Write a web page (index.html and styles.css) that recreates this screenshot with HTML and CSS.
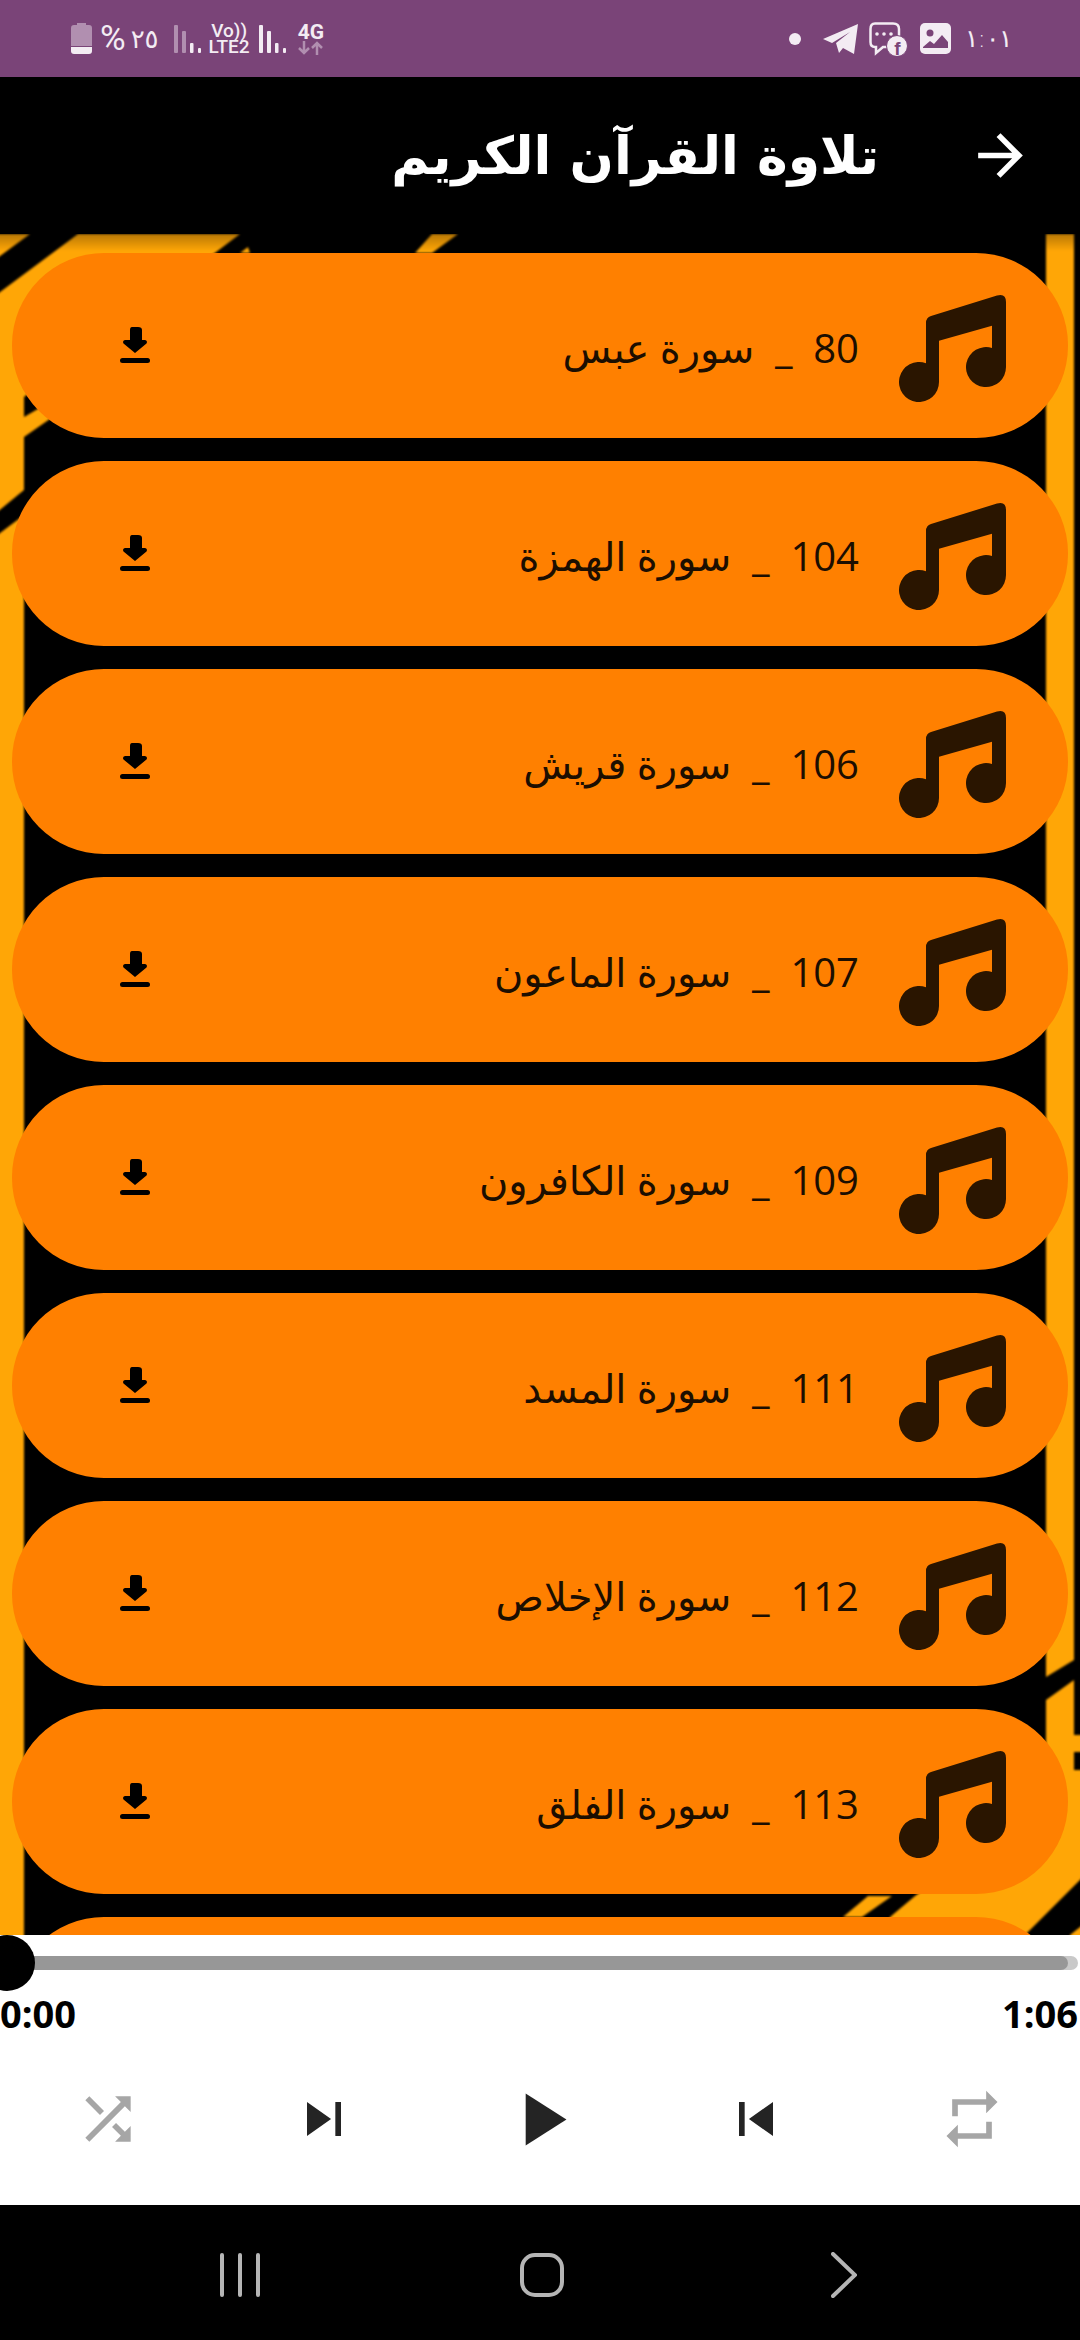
FILE: index.html
```html
<!DOCTYPE html>
<html lang="ar">
<head>
  <meta charset="UTF-8" />
  <meta name="viewport" content="width=device-width, initial-scale=1.0"/>
  <title>تلاوة القرآن الكريم</title>
  <link rel="stylesheet" href="styles.css">
</head>
<body>

  <svg class="defs" width="0" height="0">
    <symbol id="note" viewBox="0 0 108 108">
      <path d="M32 22 L98 1.5 Q107 -1 107 8 V73 A20 20 0 1 1 93 54 V31.7 L40 46.7 V88 A20 20 0 1 1 27 69.3 V29 Q27 23.5 32 22 Z"/>
    </symbol>
    <symbol id="download" viewBox="0 0 30 36">
      <path d="M12 0 H18 Q22 0 22 3 V13 H25 Q28 14 26.500 16.500 L15 26 L3.500 16.500 Q2 14 5 13 H10 V3 Q10 0 12 0 Z"/>
      <rect x="0" y="31" width="30" height="5" rx="2.500"/>
    </symbol>
  </svg>

  <div class="status-bar">
    <div class="status-left">
      <svg class="battery" width="21" height="31" viewBox="0 0 21 31">
        <path class="dim" d="M6 0 H15 V2 H18 Q21 2 21 5 V23 H0 V5 Q0 2 3 2 H6 Z"/>
        <path d="M0 24 H21 V28 Q21 31 18 31 H3 Q0 31 0 28 Z"/>
      </svg>
      <span class="percent">%</span>
      <span class="level">٢٥</span>
      <svg class="signal" width="27" height="28" viewBox="0 0 27 28">
        <rect class="dim" x="0" y="0" width="4" height="28" rx="1"/>
        <rect class="dim" x="8" y="6" width="4" height="22" rx="1"/>
        <rect x="16" y="18" width="3.500" height="10" rx="1"/>
        <rect x="24" y="23" width="3" height="5" rx="1"/>
      </svg>
      <div class="volte">
        <span>Vo))</span>
        <span>LTE2</span>
      </div>
      <svg class="signal" width="27" height="28" viewBox="0 0 27 28">
        <rect x="0" y="0" width="4" height="28" rx="1"/>
        <rect x="8" y="6" width="4" height="22" rx="1"/>
        <rect x="16" y="18" width="3.500" height="10" rx="1"/>
        <rect x="24" y="23" width="3" height="5" rx="1"/>
      </svg>
      <div class="net">
        <span>4G</span>
        <svg width="25" height="14" viewBox="0 0 25 14">
          <path class="dim-line" d="M6 0 V12 M1 7 L6 12 L11 7 M19 14 V2 M14 7 L19 2 L24 7"/>
        </svg>
      </div>
    </div>
    <div class="status-right">
      <span class="dot"></span>
      <svg class="telegram" width="37" height="32" viewBox="0 0 37 32">
        <path d="M1 16 L36 1 L32 31 L21 25 L17 30 L14 20 L28 9 L10 20 Z"/>
      </svg>
      <svg class="chat" width="39" height="34" viewBox="0 0 39 34">
        <path class="chat-line" d="M6 1.500 H24 Q30 1.500 30 7 V20 Q30 25 24 25 H14 L7 31 V25 H6 Q1.500 25 1.500 20 V7 Q1.500 1.500 6 1.500 Z"/>
        <circle class="chat-dot" cx="8" cy="12" r="1.800"/>
        <circle class="chat-dot" cx="15" cy="12" r="1.800"/>
        <circle class="chat-dot" cx="22" cy="12" r="1.800"/>
        <circle cx="28" cy="24" r="10.500" class="badge"/>
        <text x="28.500" y="33" class="badge-f">f</text>
      </svg>
      <svg class="picture" width="31" height="31" viewBox="0 0 31 31">
        <rect width="31" height="31" rx="5"/>
        <circle class="cut" cx="10" cy="10" r="3.500"/>
        <path class="cut" d="M3 24 L10 18 L14 21 L22 12 L28 19 V26 H3 Z"/>
        <rect y="25" x="3" width="25" height="3"/>
      </svg>
      <span class="clock">١:٠١</span>
    </div>
  </div>

  <div class="app-header">
    <h1>تلاوة القرآن الكريم</h1>
    <svg class="back" width="67" height="67" viewBox="0 0 24 24">
      <path d="M12 4l-1.410 1.410L16.170 11H4v2h12.170l-5.580 5.590L12 20l8-8z"/>
    </svg>
  </div>

  <div class="track-list">
    <svg class="wallpaper" width="1088" height="1709" viewBox="-4 230 1088 1709">
      <defs>
        <linearGradient id="topShade" x1="0" y1="0" x2="0" y2="1">
          <stop offset="0" stop-color="#000" stop-opacity="0.28"/>
          <stop offset="1" stop-color="#000" stop-opacity="0"/>
        </linearGradient>
      </defs>
      <polygon points="-4,234 30,234 -4,259"/>
      <polygon points="-4,295 78,234 240,234 60,370 24,397 24,417 36,410 60,395 60,412 24,437 24,490 -4,513"/>
      <polygon points="-4,536 24,515 24,1939 -4,1939"/>
      <polygon points="240,253 248,247 250,253"/>
      <polygon points="432,234 458,234 432,253 415,253"/>
      <polygon points="1046,234 1074,234 1074,1660 1046,1677"/>
      <polygon points="1046,1700 1074,1680 1074,1735 1084,1735 1084,1752 1074,1752 1074,1770 1084,1770 1084,1876 1025,1935 885,1935 890,1917 915,1896 1046,1800"/>
      <polygon points="868,1896 892,1896 862,1917 843,1917"/>
      <polygon points="1070,1935 1084,1924 1084,1939 1070,1939"/>
      <rect class="shade" x="-4" y="234" width="1088" height="17"/>
    </svg>

    <div class="track" dir="rtl">
      <svg class="note"><use href="#note"/></svg>
      <span class="track-name">80  _  سورة عبس</span>
      <svg class="save"><use href="#download"/></svg>
    </div>
    <div class="track" dir="rtl">
      <svg class="note"><use href="#note"/></svg>
      <span class="track-name">104  _  سورة الهمزة</span>
      <svg class="save"><use href="#download"/></svg>
    </div>
    <div class="track" dir="rtl">
      <svg class="note"><use href="#note"/></svg>
      <span class="track-name">106  _  سورة قريش</span>
      <svg class="save"><use href="#download"/></svg>
    </div>
    <div class="track" dir="rtl">
      <svg class="note"><use href="#note"/></svg>
      <span class="track-name">107  _  سورة الماعون</span>
      <svg class="save"><use href="#download"/></svg>
    </div>
    <div class="track" dir="rtl">
      <svg class="note"><use href="#note"/></svg>
      <span class="track-name">109  _  سورة الكافرون</span>
      <svg class="save"><use href="#download"/></svg>
    </div>
    <div class="track" dir="rtl">
      <svg class="note"><use href="#note"/></svg>
      <span class="track-name">111  _  سورة المسد</span>
      <svg class="save"><use href="#download"/></svg>
    </div>
    <div class="track" dir="rtl">
      <svg class="note"><use href="#note"/></svg>
      <span class="track-name">112  _  سورة الإخلاص</span>
      <svg class="save"><use href="#download"/></svg>
    </div>
    <div class="track" dir="rtl">
      <svg class="note"><use href="#note"/></svg>
      <span class="track-name">113  _  سورة الفلق</span>
      <svg class="save"><use href="#download"/></svg>
    </div>
    <div class="track" dir="rtl"></div>
  </div>

  <div class="player">
    <div class="seek">
      <div class="seek-fill"></div>
      <span class="thumb"></span>
    </div>
    <div class="times">
      <span>0:00</span>
      <span>1:06</span>
    </div>
    <div class="controls">
      <svg class="ctl muted" viewBox="0 0 24 24"><path d="M10.590 9.170L5.410 4 4 5.410l5.170 5.170 1.420-1.410zM14.500 4l2.040 2.040L4 18.590 5.410 20 17.960 7.460 20 9.500V4h-5.500zm.33 9.410l-1.410 1.410 3.130 3.130L14.500 20H20v-5.500l-2.040 2.040-3.130-3.130z"/></svg>
      <svg class="ctl" viewBox="0 0 24 24"><path d="M6 18l8.500-6L6 6v12zM16 6v12h2V6h-2z"/></svg>
      <svg class="ctl play" viewBox="0 0 24 24"><path d="M8 5v14l11-7z"/></svg>
      <svg class="ctl" viewBox="0 0 24 24"><path d="M6 6h2v12H6zm3.500 6l8.500 6V6z"/></svg>
      <svg class="ctl muted" viewBox="0 0 24 24"><path d="M7 7h10v3l4-4-4-4v3H5v6h2V7zm10 10H7v-3l-4 4 4 4v-3h12v-6h-2v4z"/></svg>
    </div>
  </div>

  <div class="nav-bar">
    <svg width="40" height="44" viewBox="0 0 40 44">
      <path d="M2 2 V42 M20 2 V42 M38 2 V42"/>
    </svg>
    <svg width="44" height="44" viewBox="0 0 44 44">
      <rect x="2" y="2" width="40" height="40" rx="13"/>
    </svg>
    <svg width="26" height="46" viewBox="0 0 26 46">
      <path d="M2 2 L24 23 L2 44"/>
    </svg>
  </div>

</body>
</html>
```

FILE: styles.css
```css
* {
  box-sizing: border-box;
}

body {
  margin: 0;
  height: 2340px;
  display: flex;
  flex-direction: column;
  overflow: hidden;
  background-color: black;
  font-family: "Open Sans", "DejaVu Sans", sans-serif;
}

.defs {
  position: absolute;
}

/* status bar */
.status-bar {
  height: 77px;
  flex: none;
  display: flex;
  justify-content: space-between;
  align-items: center;
  padding: 0 68px 0 71px;
  background-color: #7a4478;
  color: #f3ecf3;
  fill: #f3ecf3;
}

.status-left,
.status-right {
  display: flex;
  align-items: center;
}

.dim {
  opacity: 0.45;
}

.dim-line {
  fill: none;
  stroke: #f3ecf3;
  stroke-width: 2.5;
  opacity: 0.45;
}

.percent {
  margin-left: 8px;
  font-family: Roboto, sans-serif;
  font-size: 35px;
  line-height: 40px;
}

.level {
  margin-left: 5px;
  font-family: "DejaVu Sans", sans-serif;
  font-size: 26px;
  line-height: 30px;
  letter-spacing: -4px;
  white-space: nowrap;
}

.signal {
  margin-left: 15px;
}

.volte {
  display: flex;
  flex-direction: column;
  align-items: center;
  margin-left: 8px;
  font-family: Roboto, sans-serif;
  font-size: 19px;
  font-weight: 500;
  line-height: 16px;
}

.volte + .signal {
  margin-left: 9px;
}

.net {
  display: flex;
  flex-direction: column;
  margin-left: 12px;
  font-family: Roboto, sans-serif;
  font-size: 21px;
  font-weight: 700;
  line-height: 18px;
}

.dot {
  width: 12px;
  height: 12px;
  border-radius: 50%;
  background-color: #f3ecf3;
}

.telegram {
  margin-left: 21px;
}

.chat {
  margin-left: 10px;
}

.chat-line {
  fill: none;
  stroke: #f3ecf3;
  stroke-width: 2.5;
}

.badge {
  stroke: #7a4478;
  stroke-width: 1;
}

.badge-f {
  font-family: "Liberation Sans", sans-serif;
  font-size: 19px;
  font-weight: 700;
  text-anchor: middle;
  fill: #7a4478;
}

.picture {
  margin-left: 12px;
}

.cut {
  fill: #7a4478;
}

.clock {
  margin-left: 14px;
  font-family: "DejaVu Sans", sans-serif;
  font-size: 25px;
  font-weight: 300;
  line-height: 30px;
  letter-spacing: -5px;
  white-space: nowrap;
}

/* title */
.app-header {
  height: 157px;
  flex: none;
  display: flex;
  justify-content: flex-end;
  align-items: center;
  padding-right: 46px;
  background-color: black;
}

.app-header h1 {
  margin: 0 88px 0 0;
  font-family: "DejaVu Sans", sans-serif;
  font-size: 52px;
  font-weight: bold;
  color: white;
}

.back {
  fill: white;
}

/* list */
.track-list {
  position: relative;
  flex: 1;
  min-height: 0;
  display: flex;
  flex-direction: column;
  gap: 23px;
  padding: 19px 12px 0;
  overflow: hidden;
  background-color: black;
}

.wallpaper {
  position: absolute;
  top: -4px;
  left: -4px;
  fill: #ffa606;
  filter: blur(1px);
}

.wallpaper .shade {
  fill: url(#topShade);
}

.track {
  position: relative;
  flex: none;
  height: 185px;
  display: flex;
  align-items: center;
  gap: 40px;
  padding: 0 61px 0 108px;
  border-radius: 92px;
  background-color: #ff8000;
}

.note {
  width: 108px;
  height: 108px;
  margin-top: 5px;
  fill: #2a1500;
}

.track-name {
  flex: 1;
  margin-top: 4px;
  font-size: 40px;
  white-space: pre;
  color: #1c0e00;
}

.save {
  width: 30px;
  height: 36px;
  margin-top: -1px;
  fill: black;
}

/* player */
.player {
  height: 270px;
  flex: none;
  display: flex;
  flex-direction: column;
  padding-top: 21px;
  background-color: white;
}

.seek {
  position: relative;
  width: 1078px;
  height: 14px;
  border-radius: 7px;
  background-color: #c9c9c9;
}

.seek-fill {
  width: 1068px;
  height: 14px;
  border-radius: 7px;
  background-color: #979797;
}

.thumb {
  position: absolute;
  top: -21px;
  left: -21px;
  width: 56px;
  height: 56px;
  border-radius: 50%;
  background-color: black;
}

.times {
  display: flex;
  justify-content: space-between;
  margin-top: 23px;
  padding: 0 2px 0 0;
  font-size: 38px;
  font-weight: bold;
  line-height: 40px;
  color: black;
}

.controls {
  flex: 1;
  display: grid;
  grid-template-columns: repeat(5, 216px);
  align-items: center;
  justify-items: center;
}

.ctl {
  width: 68px;
  height: 68px;
  fill: #242424;
}

.ctl.muted {
  fill: #a6a6a6;
}

.ctl.play {
  width: 89px;
  height: 89px;
}

/* system nav */
.nav-bar {
  height: 135px;
  flex: none;
  display: grid;
  grid-template-columns: repeat(3, 302px);
  justify-content: center;
  justify-items: center;
  align-items: center;
  padding: 5px 0 0 3px;
  background-color: black;
}

.nav-bar svg {
  fill: none;
  stroke: #b5b5b5;
  stroke-width: 4;
  stroke-linecap: round;
}
```
